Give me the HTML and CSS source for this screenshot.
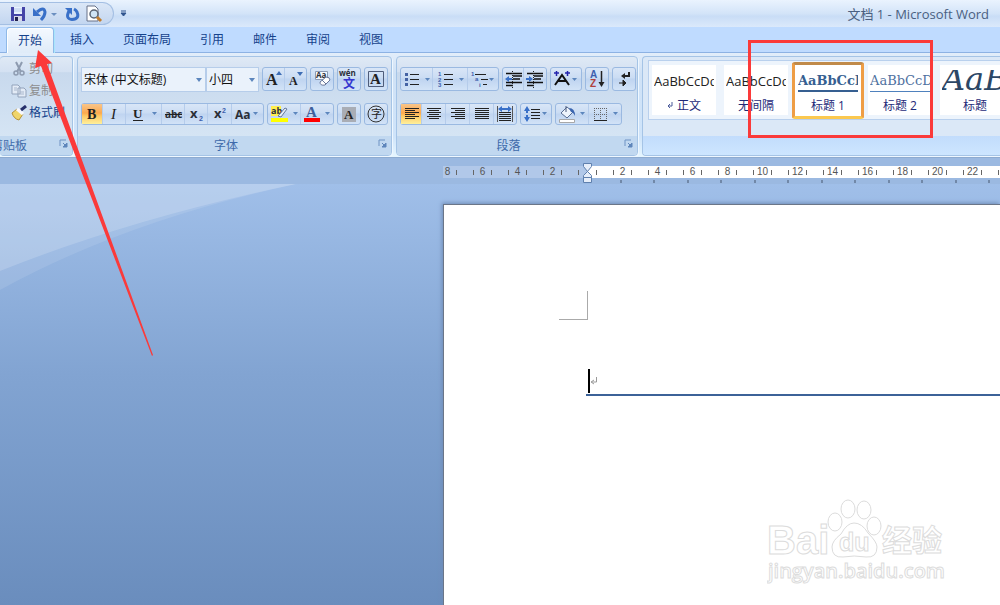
FILE: index.html
```html
<!DOCTYPE html>
<html lang="zh-CN">
<head>
<meta charset="utf-8">
<title>文档 1 - Microsoft Word</title>
<link rel="stylesheet" href="styles.css">
</head>
<body>
<svg class="defs" aria-hidden="true">
  <symbol id="launch" viewBox="0 0 9 9"><path d="M1 7V1h6" fill="none" stroke="#6f93c4"/><path d="M4 4l3 3M8 4v4H4z" stroke="#5f86bb" fill="#5f86bb"/></symbol>
</svg>
<header class="titlebar">
  <div class="quick">
    <button aria-label="保存"><svg width="18" height="18"><path d="M2 2h14v14H2z" fill="#4545a8"/><path d="M5 2h8v7H5z" fill="#e9f2ff"/><path d="M5 4h8M5 6h8" stroke="#b7c9ea"/><path d="M5 11h8v5H5z" fill="#d8d8e8"/><path d="M6 12h3v4H6z" fill="#222350"/></svg></button>
    <button class="undo" aria-label="撤消"><svg width="28" height="18"><path d="M6 7q7-6 8 0 0 4-4 8" fill="none" stroke="#3970c8" stroke-width="3"/><path d="M2 3v8h8z" fill="#3970c8"/><path d="M20 8h6l-3 3z" fill="#6b8fc0"/></svg></button>
    <button aria-label="重复"><svg width="18" height="18"><path d="M6 6Q2 14 9 14.500 17 14 14 7 13 5 11 4" fill="none" stroke="#3970c8" stroke-width="3"/><path d="M2 3h7v7z" fill="#3970c8"/></svg></button>
    <button class="preview" aria-label="打印预览"><svg width="18" height="18"><path d="M2 1h8l3 3v12H2z" fill="#fff" stroke="#667188"/><circle cx="9" cy="9" r="4" fill="#cfe4f6" stroke="#5b6575" stroke-width="1.500"/><path d="M12 12l4 4" stroke="#c07d2f" stroke-width="3"/></svg></button>
  </div>
  <button class="customize" aria-label="自定义快速访问工具栏"><svg width="8" height="8"><path d="M1 1h5M1 3h5l-2.500 3z" fill="#30558e" stroke="#30558e"/></svg></button>
  <h1 class="doc-title">文档 1 - Microsoft Word</h1>
</header>

<nav class="tabs">
  <button class="tab active">开始</button><button class="tab">插入</button><button class="tab">页面布局</button><button class="tab">引用</button><button class="tab">邮件</button><button class="tab">审阅</button><button class="tab">视图</button>
</nav>

<section class="ribbon">
  <div class="group clipboard">
    <div class="group-body">
      <button class="cmd off"><svg width="16" height="16"><path d="M5 1l5 10M11 1L6 11" stroke="#8e9bb0" stroke-width="2"/><circle cx="5" cy="12" r="2" fill="none" stroke="#8e9bb0" stroke-width="1.500"/><circle cx="11" cy="12" r="2" fill="none" stroke="#8e9bb0" stroke-width="1.500"/></svg>剪切</button>
      <button class="cmd off"><svg width="16" height="16"><path d="M1 2h6l2 2v7H1zM7 5h6l2 2v7H7z" fill="#e3ebf6" stroke="#93a3bb"/><path d="M9 9h4M9 11h4M3 5h3M3 7h3" stroke="#a9b7cc"/></svg>复制</button>
      <button class="cmd"><svg width="16" height="16"><path d="M1 8l5-4 6 5-4 6q-5-1-7-7z" fill="#f0d56a" stroke="#b3903a"/><path d="M6 4l6 5" stroke="#f8f8ff" stroke-width="3"/><path d="M10 5l5-4" stroke="#27306b" stroke-width="3"/></svg>格式刷</button>
    </div>
    <div class="group-label"><span>剪贴板</span><svg class="launch" width="9" height="9"><use href="#launch"/></svg></div>
  </div>

  <div class="group font">
    <div class="group-body">
      <div class="row top">
        <div class="combos">
          <span class="combo name"><select aria-label="字体"><option>宋体 (中文标题)</option></select><svg width="6" height="4"><path d="M0 0h6l-3 4z" fill="#5c86bd"/></svg></span>
          <span class="combo size"><select aria-label="字号"><option>小四</option></select><svg width="6" height="4"><path d="M0 0h6l-3 4z" fill="#5c86bd"/></svg></span>
        </div>
        <div class="set">
          <button aria-label="增大字体"><svg width="22" height="22"><text class="serif" x="3" y="17" font-size="16">A</text><path d="M13 7h6l-3-4z" fill="#3d6db5"/></svg></button>
          <button aria-label="缩小字体"><svg width="21" height="22"><text class="serif" x="4" y="17" font-size="12">A</text><path d="M12 4h6l-3 4z" fill="#3d6db5"/></svg></button>
        </div>
        <div class="set"><button aria-label="清除格式"><svg width="22" height="22"><path d="M4.500 3.500h12v8h-12z" fill="#f5f8fd" stroke="#8b9ab5"/><text class="sans" x="5" y="10" font-size="8">Aa</text><path d="M9 14l6-5q4 0 4 3l-5 5q-5 1-5-3z" fill="#fff" stroke="#69779a"/><path d="M11 12l4 4" stroke="#69779a"/></svg></button></div>
        <div class="set"><button aria-label="拼音指南"><svg width="22" height="22"><text class="sans" x="1" y="8" font-size="8">wén</text><text class="blue" x="5" y="20" font-size="12">文</text></svg></button></div>
        <div class="set"><button aria-label="字符边框"><svg width="22" height="22"><path d="M3.500 3.500h15v15h-15z" fill="none" stroke="#4e5c7a"/><text class="serif" x="5" y="16" font-size="15">A</text></svg></button></div>
      </div>
      <div class="row">
        <div class="set">
          <button class="on w21" aria-label="加粗"><svg width="21" height="20"><text class="serif" x="5" y="15" font-size="14">B</text></svg></button>
          <button aria-label="倾斜"><svg width="23" height="20"><text class="serif italic" x="8" y="15" font-size="15">I</text></svg></button>
          <button aria-label="下划线"><svg width="36" height="20"><text class="serif" x="7" y="14" font-size="13">U</text><path d="M7 16.500h10" stroke="#222"/><path d="M26 8h5l-2.500 3z" fill="#5c86bd"/></svg></button>
          <button aria-label="删除线"><svg width="23" height="20"><text class="sans" x="3" y="14" font-size="10">abc</text><path d="M3 10.500h17" stroke="#222"/></svg></button>
          <button aria-label="下标"><svg width="23" height="20"><text class="sans" x="5" y="14" font-size="13">x</text><text class="num" x="14" y="17" font-size="7">2</text></svg></button>
          <button aria-label="上标"><svg width="24" height="20"><text class="sans" x="6" y="14" font-size="13">x</text><text class="num" x="14" y="9" font-size="7">2</text></svg></button>
          <button aria-label="更改大小写"><svg width="31" height="20"><text class="sans" x="3" y="15" font-size="12">Aa</text><path d="M21 8h5l-2.500 3z" fill="#5c86bd"/></svg></button>
        </div>
        <div class="set">
          <button aria-label="突出显示"><svg width="33" height="20"><path d="M3 2h10v10H3z" fill="#ffef4d"/><text class="sans" x="3" y="10" font-size="9">ab</text><path d="M10 12l7-8 2 1-6 8z" fill="#e8effa" stroke="#65799c"/><path d="M3 14h17v4H3z" fill="#ff0"/><path d="M25 8h5l-2.500 3z" fill="#5c86bd"/></svg></button>
          <button aria-label="字体颜色"><svg width="32" height="20"><text class="letter" x="5" y="13" font-size="15">A</text><path d="M3 14h16v4H3z" fill="#f00"/><path d="M24 8h5l-2.500 3z" fill="#5c86bd"/></svg></button>
        </div>
        <div class="set"><button aria-label="字符底纹"><svg width="22" height="20"><path d="M4 3h14v15H4z" fill="#a9adb5"/><text class="serif" x="6" y="15" font-size="13">A</text></svg></button></div>
        <div class="set"><button aria-label="带圈字符"><svg width="22" height="20"><circle cx="11" cy="10" r="8" fill="none" stroke="#333"/><text class="cjk" x="6" y="14" font-size="11">字</text></svg></button></div>
      </div>
    </div>
    <div class="group-label"><span>字体</span><svg class="launch" width="9" height="9"><use href="#launch"/></svg></div>
  </div>

  <div class="group paragraph">
    <div class="group-body">
      <div class="row top">
        <div class="set">
          <button aria-label="项目符号"><svg width="32" height="22"><path d="M4 5h3v3H4zM4 10h3v3H4zM4 15h3v3H4z" fill="#4563a4"/><path d="M9 6.500h9M9 11.500h9M9 16.500h9" stroke="#222"/><path d="M24 10h5l-2.500 3z" fill="#5c86bd"/></svg></button>
          <button aria-label="编号"><svg width="35" height="22"><text class="num" x="5" y="8" font-size="6">1</text><text class="num" x="5" y="14" font-size="6">2</text><text class="num" x="5" y="19" font-size="6">3</text><path d="M11 6.500h9M11 11.500h9M11 16.500h9" stroke="#222"/><path d="M26 10h5l-2.500 3z" fill="#5c86bd"/></svg></button>
          <button aria-label="多级列表"><svg width="30" height="22"><text class="num" x="3" y="8" font-size="6">1</text><text class="num" x="7" y="13" font-size="6">a</text><text class="num" x="11" y="19" font-size="6">i</text><path d="M7 6.500h11M13 11.500h7M15 16.500h4" stroke="#222"/><path d="M21 10h5l-2.500 3z" fill="#5c86bd"/></svg></button>
        </div>
        <div class="set">
          <button class="w21" aria-label="减少缩进量"><svg width="21" height="22"><path d="M3 5.500h16M10 8h9M10 11h7M3 14.500h16M3 17.500h7" stroke="#111" stroke-width="1.500"/><path d="M2 11l4-3v2h3v2H6v2z" fill="#3970c8"/><path d="M9.500 3v17" stroke="#222" stroke-dasharray="1 1"/></svg></button>
          <button aria-label="增加缩进量"><svg width="22" height="22"><path d="M3 5.500h16M10 8h9M10 11h7M3 14.500h16M3 17.500h7" stroke="#111" stroke-width="1.500"/><path d="M9 11L5 8v2H2v2h3v2z" fill="#3970c8"/><path d="M9.500 3v17" stroke="#222" stroke-dasharray="1 1"/></svg></button>
        </div>
        <div class="set"><button aria-label="中文版式"><svg width="30" height="22"><path d="M4 17l7-10 7 10M7 13h8" fill="none" stroke="#111" stroke-width="2"/><path d="M3 5h5M5.500 3v5M14 5h5M16.500 3v5" stroke="#2424ae" stroke-width="1.500"/><path d="M21 10h5l-2.500 3z" fill="#5c86bd"/></svg></button></div>
        <div class="set"><button aria-label="排序"><svg width="22" height="22"><text class="num" x="4" y="10" font-size="10">A</text><text class="zed" x="4" y="19" font-size="10">Z</text><path d="M15.500 3v13" stroke="#222" stroke-width="1.500"/><path d="M12.500 14h6l-3 5z" fill="#222"/></svg></button></div>
        <div class="set"><button aria-label="显示编辑标记"><svg width="22" height="22"><path d="M16 4v4h-5" fill="none" stroke="#222" stroke-width="2"/><path d="M8 8l4-3v6z" fill="#222"/><path d="M6 15h6M10 12l3 3-3 3z" stroke="#222" fill="#222"/></svg></button></div>
      </div>
      <div class="row">
        <div class="set">
          <button class="on w21" aria-label="左对齐"><svg width="21" height="20"><path d="M4 4.500h14M4 6.500h10M4 8.500h14M4 10.500h10M4 12.500h14M4 14.500h10" stroke="#222"/></svg></button>
          <button aria-label="居中"><svg width="24" height="20"><path d="M5 4.500h14M7 6.500h10M5 8.500h14M7 10.500h10M5 12.500h14M7 14.500h10" stroke="#222"/></svg></button>
          <button aria-label="右对齐"><svg width="24" height="20"><path d="M5 4.500h14M9 6.500h10M5 8.500h14M9 10.500h10M5 12.500h14M9 14.500h10" stroke="#222"/></svg></button>
          <button aria-label="两端对齐"><svg width="24" height="20"><path d="M5 4.500h14M5 6.500h14M5 8.500h14M5 10.500h14M5 12.500h14M5 14.500h14" stroke="#222"/></svg></button>
          <button aria-label="分散对齐"><svg width="22" height="20"><path d="M3.500 2v16M18.500 2v16" stroke="#555"/><path d="M5 8.500h12M5 10.500h12M5 12.500h12M5 14.500h12M5 16.500h12" stroke="#222"/><path d="M8 2L4 5l4 3zM14 2l4 3-4 3z" fill="#3970c8"/><path d="M7 5h8" stroke="#3970c8" stroke-width="2"/></svg></button>
        </div>
        <div class="set"><button aria-label="行距"><svg width="30" height="20"><path d="M3 7l3-5 3 5zM3 13l3 5 3-5zM5 7h2v2H5zM5 11h2v2H5z" fill="#3970c8"/><path d="M10 5.500h9M10 8.500h9M10 11.500h9M10 14.500h9" stroke="#222"/><path d="M21 8h5l-2.500 3z" fill="#5c86bd"/></svg></button></div>
        <div class="set">
          <button aria-label="底纹"><svg width="33" height="20"><path d="M5 9l6-6 6 5-6 6z" fill="#eef4fc" stroke="#5a6e93"/><path d="M10 2v6" stroke="#4a5a7c"/><path d="M13 4q6 0 6 8-2-4-4-4z" fill="#3b66b0"/><path d="M3.500 15.500h15v3h-15z" fill="#fff" stroke="#a8a8a8"/><path d="M24 8h5l-2.500 3z" fill="#5c86bd"/></svg></button>
          <button aria-label="边框"><svg width="32" height="20"><path d="M5 4.500h13M5 10.500h13M5.500 4v12M11.500 4v12M17.500 4v12" stroke="#666" stroke-dasharray="1 1"/><path d="M5 16.500h13" stroke="#222"/><path d="M24 8h5l-2.500 3z" fill="#5c86bd"/></svg></button>
        </div>
      </div>
    </div>
    <div class="group-label"><span>段落</span><svg class="launch" width="9" height="9"><use href="#launch"/></svg></div>
  </div>

  <div class="group styles">
    <div class="gallery">
      <button class="style"><span class="sample">AaBbCcDd</span><span class="style-name"><svg class="mark" width="6" height="8"><path d="M5 0v4H1M3 2L1 4l2 2" fill="none" stroke="#4a5a9a"/></svg>正文</span></button>
      <button class="style"><span class="sample">AaBbCcDd</span><span class="style-name">无间隔</span></button>
      <button class="style selected"><span class="sample h1">AaBbCcDd</span><span class="style-name">标题 1</span></button>
      <button class="style"><span class="sample h2">AaBbCcDd</span><span class="style-name">标题 2</span></button>
      <button class="style last"><span class="sample title">AaBb</span><span class="style-name">标题</span></button>
    </div>
    <div class="group-label"></div>
  </div>
</section>

<main class="workspace">
  <div class="ruler-row">
    <div class="ruler">
      <div class="ruler-neg"><span>8</span><span>6</span><span>4</span><span>2</span></div>
      <div class="ruler-pos"><span>2</span><span>4</span><span>6</span><span>8</span><span>10</span><span>12</span><span>14</span><span>16</span><span>18</span><span>20</span><span>22</span><span>24</span></div>
      <svg class="indent" width="11" height="22"><path d="M1.500 1.500h8v3l-4 5-4-5zM1.500 15.500v-2l4-4 4 4v2zM1.500 15.500h8v5h-8z" fill="#e6eefa" stroke="#5f80ae"/></svg>
    </div>
    <svg class="tab-stops" width="557" height="3"><path d="M178 0v3M211 0v3M245 0v3M278 0v3M312 0v3M345 0v3M379 0v3M412 0v3M446 0v3M479 0v3M513 0v3M546 0v3" stroke="#7188a8" stroke-width="2"/></svg>
  </div>
  <div class="canvas">
    <svg class="swoosh" width="296" height="107"><path d="M0 0h296Q125 37 0 106z" fill="#fff" opacity=".1"/><path d="M0 0h296Q130 35 0 87z" fill="#fff" opacity=".17"/></svg>
    <article class="page">
      <div class="crop-mark"></div>
      <div class="heading"><span class="caret"></span><svg width="8" height="10"><path d="M6.500 1v5H2M4 4L1 6l3 2" fill="none" stroke="#999"/></svg></div>
      <svg class="watermark" width="190" height="90">
        <g fill="#fff" stroke="#dcdcdc">
          <text x="0" y="57" font-size="40" class="wm-bold">Bai</text>
          <ellipse cx="68" cy="25" rx="7" ry="9"/><ellipse cx="81" cy="12" rx="7" ry="9"/><ellipse cx="97" cy="13" rx="7" ry="9"/><ellipse cx="107" cy="29" rx="7" ry="9"/>
          <path d="M87 26q8 0 14 10 9 9 9 14 0 11-11 10-12-2-23 0-11 1-11-10 0-6 9-13 6-11 13-11z"/>
          <text x="72" y="54" font-size="25" class="wm-bold">du</text>
          <text x="115" y="54" font-size="30" class="wm-cjk">经验</text>
          <text x="1" y="81" font-size="20" class="wm-url">jingyan.baidu.com</text>
        </g>
      </svg>
    </article>
  </div>
</main>
<svg class="markup" width="940" height="360" aria-hidden="true">
  <path d="M38 50L35 68l6-2 111 290 1-1L47 64l5-1z" fill="#fb3a3a"/>
  <path d="M749.500 41.500h182v95h-182z" fill="none" stroke="#fb3a3a" stroke-width="3"/>
</svg>
</body>
</html>
```
FILE: styles.css
```css
* { box-sizing: border-box; }
body {
  margin: 0;
  min-height: 100vh;
  display: flex;
  flex-direction: column;
  position: relative;
  overflow: hidden;
  font: 12px/16px "Open Sans", "Noto Sans CJK SC", sans-serif;
  color: #15428b;
}
button {
  font: inherit;
  color: inherit;
  background: none;
  border: 0;
  padding: 0;
  margin: 0;
  display: block;
}
svg { display: block; flex: none; }
.defs { position: absolute; width: 0; height: 0; }

.titlebar {
  height: 27px;
  flex: none;
  display: flex;
  align-items: center;
  background: linear-gradient(#eaf3fe, #d3e4f8 50%, #c9ddf6 60%, #dbe9fb);
}
.quick {
  height: 23px;
  width: 114px;
  padding-left: 9px;
  display: flex;
  align-items: center;
  gap: 4px;
  border: 1px solid #a4bfe3;
  border-left: 0;
  border-radius: 0 12px 12px 0;
  background: linear-gradient(#dbe7f7, #c3d6f0);
}
.customize { margin-left: 6px; }
.doc-title {
  margin: 0 11px 0 auto;
  font-size: 13px;
  font-weight: 400;
  color: #4a5f80;
}

.tabs {
  height: 26px;
  flex: none;
  display: flex;
  gap: 1px;
  padding-left: 6px;
  background: #bfdbff;
  border-bottom: 1px solid #8db2e3;
}
.tab { padding: 0 14px; height: 26px; }
.tab.active {
  padding: 0 11px;
  margin-right: 1px;
  border: 1px solid #8fb9e8;
  border-bottom: 0;
  border-radius: 4px 4px 0 0;
  background: linear-gradient(#f4f9ff, #dfebf8);
  box-shadow: inset 1px 1px #fff, 1px 0 #a9e6fb;
}

.ribbon {
  height: 105px;
  flex: none;
  display: flex;
  gap: 4px;
  padding: 3px 0 1px;
  background: linear-gradient(#e2edfa, #d0e2f6 20%, #cfe4fa 80%, #e6f6ff);
  border-bottom: 1px solid #8eabd0;
}
.group {
  flex: none;
  display: flex;
  flex-direction: column;
  border: 1px solid #a5c4e6;
  border-radius: 4px;
  overflow: hidden;
  background: linear-gradient(#dfe9f5, #d4e1f2 15%, #c8d9ed 16%, #d9e8f6);
  box-shadow: 1px 1px #eef7ff;
}
.clipboard { width: 73px; border-left: 0; }
.font { width: 315px; }
.paragraph { width: 242px; }
.styles { flex: 1; min-width: 0; border-right: 0; border-radius: 4px 0 0 4px; background: #dbe8f7; }
.group-body { flex: 1; padding: 10px 3px 0; }
.clipboard .group-body { padding: 1px 0 0 11px; }
.group-label {
  height: 19px;
  flex: none;
  display: flex;
  align-items: center;
  justify-content: center;
  position: relative;
  background: #c1d8f0;
  color: #3e6aaa;
}
.font .group-label, .paragraph .group-label { padding-right: 17px; }
.clipboard .group-label { justify-content: flex-start; }
.clipboard .group-label span { margin-left: -9px; }
.styles .group-label { background: linear-gradient(#c2dcfc, #cde6ff); }
.launch { position: absolute; right: 4px; top: 3px; }

.cmd { display: flex; align-items: center; gap: 2px; height: 22px; white-space: nowrap; }
.off { color: #8d8d8d; }

.row { display: flex; gap: 3px; height: 22px; }
.row.top { height: 25px; margin-bottom: 11px; }
.set {
  display: flex;
  height: 22px;
  border: 1px solid #9ab9e1;
  border-radius: 3px;
  background: linear-gradient(#d9e6f7, #cadcf3 45%, #bfd4f0 50%, #d2e3f7);
}
.top .set { height: 24px; }
.set button + button { box-shadow: -1px 0 #b5cceb; }
.set .on { background: linear-gradient(#f9c58a, #fca94e 45%, #fdc965 60%, #fff09b); }
.combos { display: flex; }
.combo { position: relative; height: 25px; }
.combo.name { width: 125px; }
.combo.size { width: 53px; }
.combo svg { position: absolute; right: 4px; top: 11px; }
.combo select {
  appearance: none;
  width: 100%;
  height: 25px;
  padding: 0 2px;
  border: 1px solid #b6cdea;
  border-radius: 0;
  background: #eaf2fb;
  font: inherit;
  color: #111;
}
.serif { font-family: "Liberation Serif", serif; font-weight: 700; fill: #222; }
.italic { font-style: italic; font-weight: 400; }
.sans { font-family: "Open Sans", sans-serif; font-weight: 700; fill: #2b2f38; }
.num { font-family: "Liberation Sans", sans-serif; font-weight: 700; fill: #3d5fae; }
.zed { font-family: "Liberation Sans", sans-serif; font-weight: 700; fill: #b0413e; }
.letter { font-family: "Liberation Serif", serif; font-weight: 700; fill: #3e5f9c; }
.blue { font-family: "Noto Sans CJK SC", sans-serif; font-weight: 700; fill: #3535cf; }
.cjk { font-family: "Noto Sans CJK SC", sans-serif; fill: #222; }

.gallery {
  flex: none;
  display: flex;
  align-items: center;
  gap: 8px;
  height: 60px;
  margin: 3px 0 16px 5px;
  padding-left: 3px;
  border: 1px solid #b9d0ed;
  border-right: 0;
  background: #edf4fc;
  overflow: hidden;
}
.style {
  flex: none;
  width: 64px;
  height: 50px;
  padding: 5px 2px 0;
  background: #fff;
  display: flex;
  flex-direction: column;
  gap: 6px;
  overflow: hidden;
}
.sample {
  flex: none;
  width: 60px;
  height: 22px;
  line-height: 22px;
  font-size: 13px;
  color: #222;
  overflow: hidden;
  text-align: left;
}
.style-name { align-self: center; display: flex; align-items: center; gap: 4px; color: #1e2a78; white-space: pre; }
.selected {
  width: 72px;
  height: 57px;
  margin: 0 -4px;
  padding: 5px 3px 0;
  border: 3px solid #f0a848;
  border-color: #c08a4a #ee9d45 #fbc84f;
  border-radius: 3px;
}
.h1, .h2 { font-family: "DejaVu Serif", serif; font-size: 13px; color: #365f91; border-bottom: 2px solid #365f91; }
.h1 { font-weight: 700; }
.h2 { border-bottom: 1px solid #4f81bd; color: #4f71a0; }
.last { width: 70px; }
.title {
  width: 66px;
  height: 24px;
  margin-bottom: -2px;
  font: italic 32px/18px "DejaVu Serif", serif;
  color: #2c4766;
}

.workspace { flex: 1; display: flex; flex-direction: column; background: #9bb9e1; }
.ruler-row { height: 26px; flex: none; padding: 8px 0 0 443px; overflow: hidden; }
.ruler {
  display: flex;
  position: relative;
  height: 12px;
  font: 10px/12px "Liberation Sans", sans-serif;
  color: #555;
}
.ruler-neg { display: flex; align-items: center; justify-content: flex-end; width: 144px; padding-right: 8px; background: #b1c8e9; overflow: hidden; }
.ruler-pos { display: flex; align-items: center; flex: 1; min-width: 0; padding-left: 9px; background: #fff; overflow: hidden; }
.ruler-neg::after, .ruler-pos::before { content: ""; flex: none; width: 1px; height: 5px; background: #666; }
.ruler-neg::after { margin-left: 8px; }
.ruler-pos::before { margin-right: 8px; }
.ruler span {
  flex: none;
  width: 35px;
  display: flex;
  justify-content: space-between;
  align-items: center;
  padding: 0 8px;
}
.ruler span::before, .ruler span::after { content: ""; width: 1px; height: 5px; background: #666; }
.indent { position: absolute; left: 139px; top: -4px; }
.tab-stops { margin-top: 2px; }

.canvas {
  flex: 1;
  display: flex;
  position: relative;
  padding: 20px 0 0 443px;
  background: linear-gradient(#a0bfe9, #82a4d2 45%, #6a8dbd);
}
.swoosh { position: absolute; left: 0; top: 0; }
.page {
  flex: 1;
  position: relative;
  padding: 86px 0 0 115px;
  background: #fff;
  border: 1px solid #6b7688;
  border-width: 1px 0 0 1px;
  box-shadow: -1px -1px 4px #6f8cb5;
}
.crop-mark { width: 29px; height: 29px; border: 1px solid #aaa; border-width: 0 1px 1px 0; }
.heading {
  display: flex;
  align-items: center;
  height: 28px;
  margin: 48px 0 0 27px;
  border-bottom: 2px solid #3c6298;
}
.caret { width: 2px; height: 24px; margin-left: 2px; background: #000; }
.watermark { position: absolute; left: 323px; top: 292px; }
.wm-bold { font-family: "Liberation Sans", sans-serif; font-weight: 700; }
.wm-cjk { font-family: "Noto Sans CJK SC", sans-serif; font-weight: 700; }
.wm-url { font-family: "Open Sans", sans-serif; font-weight: 600; }
.markup { position: absolute; left: 0; top: 0; pointer-events: none; }
```
